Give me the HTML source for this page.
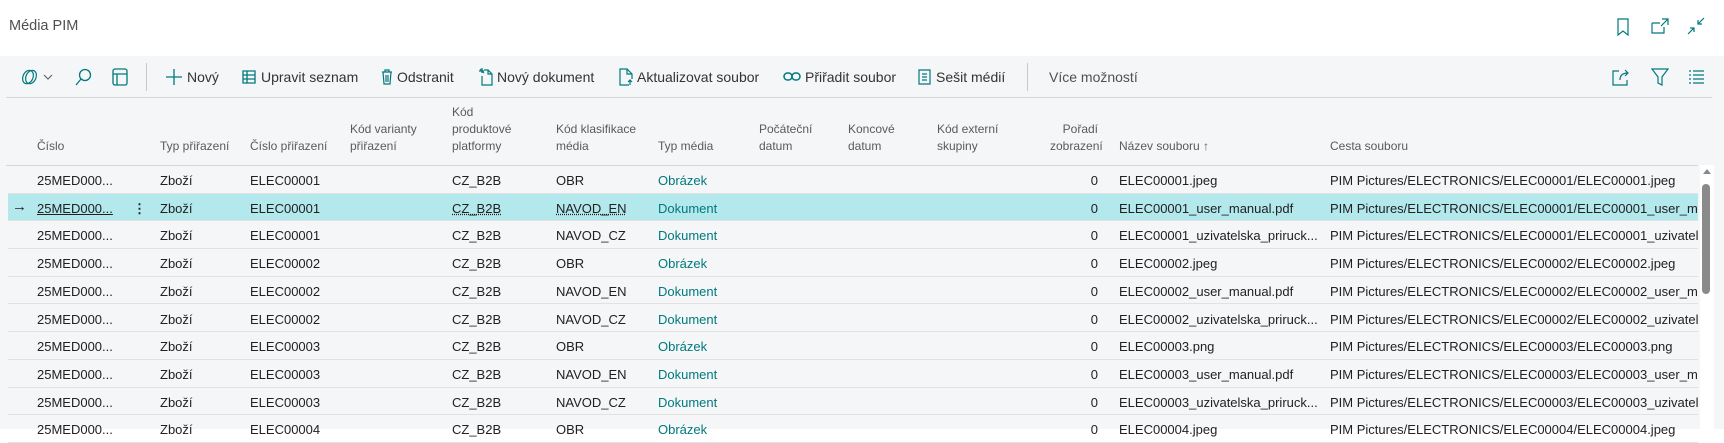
<!DOCTYPE html>
<html><head><meta charset="utf-8"><style>
*{margin:0;padding:0;box-sizing:border-box}
body{width:1724px;height:429px;overflow:hidden;background:#fff;font-family:"Liberation Sans",sans-serif;color:#212121;position:relative}
.a{position:absolute;white-space:nowrap}
#band{position:absolute;left:0;top:56px;width:1724px;height:373px;background:#f5f6f7}
.tb{font-size:14px;color:#333;top:69px}
.h{font-size:12px;color:#5a5a5a;line-height:17px}
.row{position:absolute;left:8px;width:1690px;height:27.7px;border-bottom:1px solid #e2e2e2}
.c{position:absolute;top:7px;font-size:13px;white-space:nowrap;color:#212121}
.t{color:#00797e}
svg{position:absolute}
</style></head><body>
<div class="a" style="left:9px;top:18px;font-size:14.5px;color:#505050">Média PIM</div>
<svg style="left:1616px;top:18px" width="14" height="18" viewBox="0 0 14 18" fill="none" stroke="#00797e" stroke-width="1.2"><path d="M2 1h10v16l-5-4-5 4z"/></svg>
<svg style="left:1651px;top:18px" width="18" height="16" viewBox="0 0 18 16" fill="none" stroke="#00797e" stroke-width="1.2"><path d="M1 5h8M1 5v10h12V9M11 1h6v6M17 1l-7 7"/></svg>
<svg style="left:1687px;top:17px" width="18" height="18" viewBox="0 0 18 18" fill="none" stroke="#00797e" stroke-width="1.2"><path d="M17 1l-6 6M11 3v4h4M1 17l6-6M7 15v-4H3"/></svg>
<div id="band"></div>
<div class="a" style="left:6px;top:97px;width:1706px;height:1px;background:#d6d6d6"></div>
<svg style="left:20px;top:68px" width="34" height="18" viewBox="0 0 34 18" fill="none" stroke="#00797e" stroke-width="1.2"><ellipse cx="8" cy="9" rx="5" ry="7" transform="rotate(25 8 9)"/><ellipse cx="11" cy="9" rx="5" ry="7" transform="rotate(25 11 9)"/><path d="M24 7l4 4 4-4" stroke="#666"/></svg>
<svg style="left:74px;top:68px" width="18" height="18" viewBox="0 0 18 18" fill="none" stroke="#00797e" stroke-width="1.3"><circle cx="11" cy="7" r="5.5"/><path d="M7 11l-5 6"/></svg>
<svg style="left:112px;top:68px" width="16" height="18" viewBox="0 0 16 18" fill="none" stroke="#00797e" stroke-width="1.3"><rect x="1" y="1" width="14" height="16" rx="2"/><path d="M1 6h14M5 6v11"/></svg>
<div class="a" style="left:146px;top:63px;width:1px;height:28px;background:#c8c8c8"></div>
<svg style="left:166px;top:69px" width="16" height="16" viewBox="0 0 16 16" fill="none" stroke="#00797e" stroke-width="1.3"><path d="M8 0v16M0 8h16"/></svg>
<div class="a tb" style="left:187px">Nový</div>
<svg style="left:242px;top:70px" width="16" height="14" viewBox="0 0 16 14" fill="none" stroke="#00797e" stroke-width="1.3"><path d="M1 1h12v12H1zM1 5h12M1 9h12M5 1v12"/></svg>
<div class="a tb" style="left:261px">Upravit seznam</div>
<svg style="left:381px;top:69px" width="12" height="16" viewBox="0 0 12 16" fill="none" stroke="#00797e" stroke-width="1.2"><path d="M1 3h10M4 3V1h4v2M2 3l1 12h6l1-12M5 6v7M7 6v7"/></svg>
<div class="a tb" style="left:397px">Odstranit</div>
<svg style="left:479px;top:68px" width="14" height="18" viewBox="0 0 14 18" fill="none" stroke="#00797e" stroke-width="1.2"><path d="M5 2h4l4 4v11H3V8M9 2v4h4M1 1l4 4M3 0v5M0 3h5"/></svg>
<div class="a tb" style="left:497px">Nový dokument</div>
<svg style="left:619px;top:68px" width="14" height="18" viewBox="0 0 14 18" fill="none" stroke="#00797e" stroke-width="1.2"><path d="M10 17H1V1h7l5 5v5M8 1v5h5M11 17v-5M9 14l2-2 2 2"/></svg>
<div class="a tb" style="left:637px">Aktualizovat soubor</div>
<svg style="left:783px;top:71px" width="18" height="12" viewBox="0 0 18 12" fill="none" stroke="#00797e" stroke-width="1.5"><rect x="1" y="2" width="8" height="7" rx="3.5"/><rect x="9" y="2" width="8" height="7" rx="3.5"/></svg>
<div class="a tb" style="left:805px">Přiřadit soubor</div>
<svg style="left:918px;top:69px" width="13" height="16" viewBox="0 0 13 16" fill="none" stroke="#00797e" stroke-width="1.2"><path d="M1 1h11v14H1zM4 5h5M4 8h5M4 11h5"/></svg>
<div class="a tb" style="left:936px">Sešit médií</div>
<div class="a" style="left:1027px;top:63px;width:1px;height:28px;background:#c8c8c8"></div>
<div class="a tb" style="left:1049px;color:#505050">Více možností</div>
<svg style="left:1612px;top:68px" width="18" height="18" viewBox="0 0 18 18" fill="none" stroke="#00797e" stroke-width="1.2"><path d="M7 3H1v14h14v-5M8 12c0-5 3-7 8-7M13 2l3 3-3 3"/></svg>
<svg style="left:1651px;top:68px" width="18" height="18" viewBox="0 0 18 18" fill="none" stroke="#00797e" stroke-width="1.2"><path d="M1 1h16l-6 8v8l-4-2V9z"/></svg>
<svg style="left:1688px;top:70px" width="16" height="14" viewBox="0 0 16 14" fill="none" stroke="#00797e" stroke-width="1.2"><path d="M1 1h2M5 1h11M1 5h2M5 5h11M1 9h2M5 9h11M1 13h2M5 13h11"/></svg>

<div class="a h" style="left:37px;top:138px">Číslo</div>
<div class="a h" style="left:160px;top:138px">Typ přiřazení</div>
<div class="a h" style="left:250px;top:138px">Číslo přiřazení</div>
<div class="a h" style="left:350px;top:121px">Kód varianty<br>přiřazení</div>
<div class="a h" style="left:452px;top:104px">Kód<br>produktové<br>platformy</div>
<div class="a h" style="left:556px;top:121px">Kód klasifikace<br>média</div>
<div class="a h" style="left:658px;top:138px">Typ média</div>
<div class="a h" style="left:759px;top:121px">Počáteční<br>datum</div>
<div class="a h" style="left:848px;top:121px">Koncové<br>datum</div>
<div class="a h" style="left:937px;top:121px">Kód externí<br>skupiny</div>
<div class="a h" style="left:1050px;top:121px;width:48px;text-align:right">Pořadí<br>zobrazení</div>
<div class="a h" style="left:1119px;top:138px">Název souboru ↑</div>
<div class="a h" style="left:1330px;top:138px">Cesta souboru</div>
<div class="a" style="left:6px;top:165px;width:1692px;height:1px;background:#d6d6d6"></div>
<div class="a" style="left:1700px;top:165px;width:14px;height:265px;background:#fff"></div>
<div class="a" style="left:1703px;top:169px;width:0;height:0;border:4px solid transparent;border-bottom:5px solid #888;border-top:0"></div>
<div class="a" style="left:1702px;top:184px;width:8px;height:110px;border-radius:4px;background:#8a8a8a"></div>

<div id="rows"></div>
<script>
var d=[["ELEC00001","OBR","Obrázek","ELEC00001.jpeg","PIM Pictures/ELECTRONICS/ELEC00001/ELEC00001.jpeg"],
["ELEC00001","NAVOD_EN","Dokument","ELEC00001_user_manual.pdf","PIM Pictures/ELECTRONICS/ELEC00001/ELEC00001_user_ma"],
["ELEC00001","NAVOD_CZ","Dokument","ELEC00001_uzivatelska_priruck...","PIM Pictures/ELECTRONICS/ELEC00001/ELEC00001_uzivatels"],
["ELEC00002","OBR","Obrázek","ELEC00002.jpeg","PIM Pictures/ELECTRONICS/ELEC00002/ELEC00002.jpeg"],
["ELEC00002","NAVOD_EN","Dokument","ELEC00002_user_manual.pdf","PIM Pictures/ELECTRONICS/ELEC00002/ELEC00002_user_ma"],
["ELEC00002","NAVOD_CZ","Dokument","ELEC00002_uzivatelska_priruck...","PIM Pictures/ELECTRONICS/ELEC00002/ELEC00002_uzivatels"],
["ELEC00003","OBR","Obrázek","ELEC00003.png","PIM Pictures/ELECTRONICS/ELEC00003/ELEC00003.png"],
["ELEC00003","NAVOD_EN","Dokument","ELEC00003_user_manual.pdf","PIM Pictures/ELECTRONICS/ELEC00003/ELEC00003_user_ma"],
["ELEC00003","NAVOD_CZ","Dokument","ELEC00003_uzivatelska_priruck...","PIM Pictures/ELECTRONICS/ELEC00003/ELEC00003_uzivatels"],
["ELEC00004","OBR","Obrázek","ELEC00004.jpeg","PIM Pictures/ELECTRONICS/ELEC00004/ELEC00004.jpeg"]];
var h="";
d.forEach(function(r,i){var y=166+i*27.7,s=i==1;
h+='<div class="row" style="top:'+y+'px;'+(s?'background:#b3e8ec':'')+'">'+
(s?'<div class="c" style="left:4px;top:4px;font-size:15px">→</div><div class="c" style="left:125px;font-weight:bold">⋮</div>':'')+
'<div class="c" style="left:29px;'+(s?'text-decoration:underline':'')+'">25MED000...</div>'+
'<div class="c" style="left:152px">Zboží</div><div class="c" style="left:242px">'+r[0]+'</div>'+
'<div class="c" style="left:444px;'+(s?'text-decoration:underline dotted':'')+'">CZ_B2B</div>'+
'<div class="c" style="left:548px;'+(s?'text-decoration:underline dotted':'')+'">'+r[1]+'</div>'+
'<div class="c t" style="left:650px">'+r[2]+'</div>'+
'<div class="c" style="left:1060px;width:30px;text-align:right">0</div>'+
'<div class="c" style="left:1111px;width:208px;overflow:hidden">'+r[3]+'</div>'+
'<div class="c" style="left:1322px;width:368px;overflow:hidden">'+r[4]+'</div></div>';});
document.getElementById("rows").innerHTML=h;
</script>
</body></html>
